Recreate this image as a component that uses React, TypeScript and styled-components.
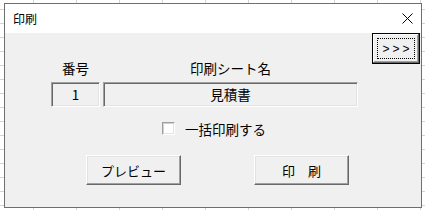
import React from 'react';
import styled, {createGlobalStyle} from "styled-components";

// Global
const GlobalStyle = createGlobalStyle`
  html, body {
    margin: 0;
    padding: 0;
  }
  body {
    width: 425px;
    height: 210px;
    overflow: hidden;
    background-color: #ffffff;
    background-image: linear-gradient(to right, #d4d4d4 1px, transparent 1px),
    linear-gradient(to bottom, #d4d4d4 1px, transparent 1px);
    background-size: 43px 14px;
    background-position: 33px 9px;
    font-family: "Noto Sans CJK JP", "Noto Sans", sans-serif;
  }
`

// Type (TS)
type BoxPropsType = {
    width: number
}

// FC
const App: React.FC = () => {
    return (
        <>
            <GlobalStyle/>
            <StyledDialog>
                <StyledTitleBar>
                    <StyledTitle>印刷</StyledTitle>
                    <StyledCloseButton>
                        <svg width="11" height="11" viewBox="0 0 11 11" fill="none" xmlns="http://www.w3.org/2000/svg">
                            <path d="M0.5 0.5L10.5 10.5M10.5 0.5L0.5 10.5" stroke="#000" strokeWidth="1"/>
                        </svg>
                    </StyledCloseButton>
                </StyledTitleBar>

                <StyledBody>
                    <StyledMain>
                        <StyledFieldGrid>
                            <StyledLabel>番号</StyledLabel>
                            <StyledLabel>印刷シート名</StyledLabel>
                            <StyledField width={49}>1</StyledField>
                            <StyledField width={255}>見積書</StyledField>
                        </StyledFieldGrid>

                        <StyledCheckRow>
                            <StyledCheckBox/>
                            <StyledCheckLabel>一括印刷する</StyledCheckLabel>
                        </StyledCheckRow>

                        <StyledButtonRow>
                            <StyledButton>プレビュー</StyledButton>
                            <StyledButton>印　刷</StyledButton>
                        </StyledButtonRow>
                    </StyledMain>

                    <StyledMoreButton>
                        <StyledFocusRect>&gt;&gt;&gt;</StyledFocusRect>
                    </StyledMoreButton>
                </StyledBody>
            </StyledDialog>
        </>
    );
};

export default App;

// Style
// Dialog
const StyledDialog = styled.div`
  display: flex;
  flex-direction: column;
  box-sizing: border-box;
  margin: 3px 0 0 4px;
  width: 418px;
  height: 205px;
  border: 1px solid #6f6f6f;
  background: #f0f0f0;
`
const StyledTitleBar = styled.div`
  display: flex;
  align-items: center;
  justify-content: space-between;
  height: 29px;
  padding: 0 8px 0 8px;
  background: #ffffff;
`
const StyledTitle = styled.div`
  font-size: 12px;
  color: #000;
  line-height: 16px;
`
const StyledCloseButton = styled.div`
  display: flex;
  align-items: center;
  justify-content: center;
  width: 11px;
  height: 11px;
  margin-right: 0;
`
// Body
const StyledBody = styled.div`
  display: flex;
  flex: 1;
  align-items: flex-start;
  padding-left: 46px;
`
const StyledMain = styled.div`
  display: flex;
  flex-direction: column;
  padding-top: 26px;
`
const StyledFieldGrid = styled.div`
  display: grid;
  grid-template-columns: 49px 255px;
  column-gap: 3px;
  row-gap: 5px;
`
const StyledLabel = styled.div`
  font-size: 13.5px;
  line-height: 18px;
  text-align: center;
  color: #000;
`
const StyledField = styled.div<BoxPropsType>`
  box-sizing: border-box;
  width: ${props => props.width}px;
  height: 25px;
  border-top: 1px solid #a0a0a0;
  border-left: 1px solid #a0a0a0;
  border-right: 1px solid #ffffff;
  border-bottom: 1px solid #ffffff;
  box-shadow: inset 1px 1px 0 #696969, inset -1px -1px 0 #e3e3e3;
  font-size: 13.5px;
  line-height: 22px;
  text-align: center;
  color: #000;
`
// Checkbox
const StyledCheckRow = styled.div`
  display: flex;
  align-items: center;
  gap: 10px;
  margin-top: 15px;
  padding-left: 111px;
  height: 13px;
`
const StyledCheckBox = styled.div`
  box-sizing: border-box;
  width: 13px;
  height: 13px;
  border-top: 1px solid #a0a0a0;
  border-left: 1px solid #a0a0a0;
  border-right: 1px solid #ffffff;
  border-bottom: 1px solid #ffffff;
  box-shadow: inset 1px 1px 0 #d0d0d0, inset -1px -1px 0 #e3e3e3;
  background: #ffffff;
`
const StyledCheckLabel = styled.div`
  font-size: 13.5px;
  line-height: 16px;
  color: #000;
`
// Buttons
const StyledButtonRow = styled.div`
  display: flex;
  gap: 73px;
  margin-top: 20px;
  padding-left: 35px;
`
const StyledButton = styled.div`
  box-sizing: border-box;
  display: flex;
  align-items: center;
  justify-content: center;
  width: 95px;
  height: 30px;
  border-top: 1px solid #ffffff;
  border-left: 1px solid #ffffff;
  border-right: 1px solid #696969;
  border-bottom: 1px solid #696969;
  box-shadow: inset -1px -1px 0 #a0a0a0, inset 1px 1px 0 #e3e3e3;
  background: #f0f0f0;
  font-size: 13px;
  color: #000;
`
const StyledMoreButton = styled.div`
  box-sizing: border-box;
  display: flex;
  align-items: center;
  justify-content: center;
  margin-left: auto;
  margin-right: 1px;
  width: 48px;
  height: 31px;
  border: 1px solid #000;
  box-shadow: inset -1px -1px 0 #696969, inset 1px 1px 0 #ffffff, inset -2px -2px 0 #a0a0a0;
  background: #f0f0f0;
`
const StyledFocusRect = styled.div`
  box-sizing: border-box;
  display: flex;
  align-items: center;
  justify-content: center;
  width: 38px;
  height: 21px;
  border: 1px dotted #000;
  font-family: "Liberation Sans", sans-serif;
  font-size: 12px;
  letter-spacing: 3px;
  padding-left: 3px;
  color: #000;
`
